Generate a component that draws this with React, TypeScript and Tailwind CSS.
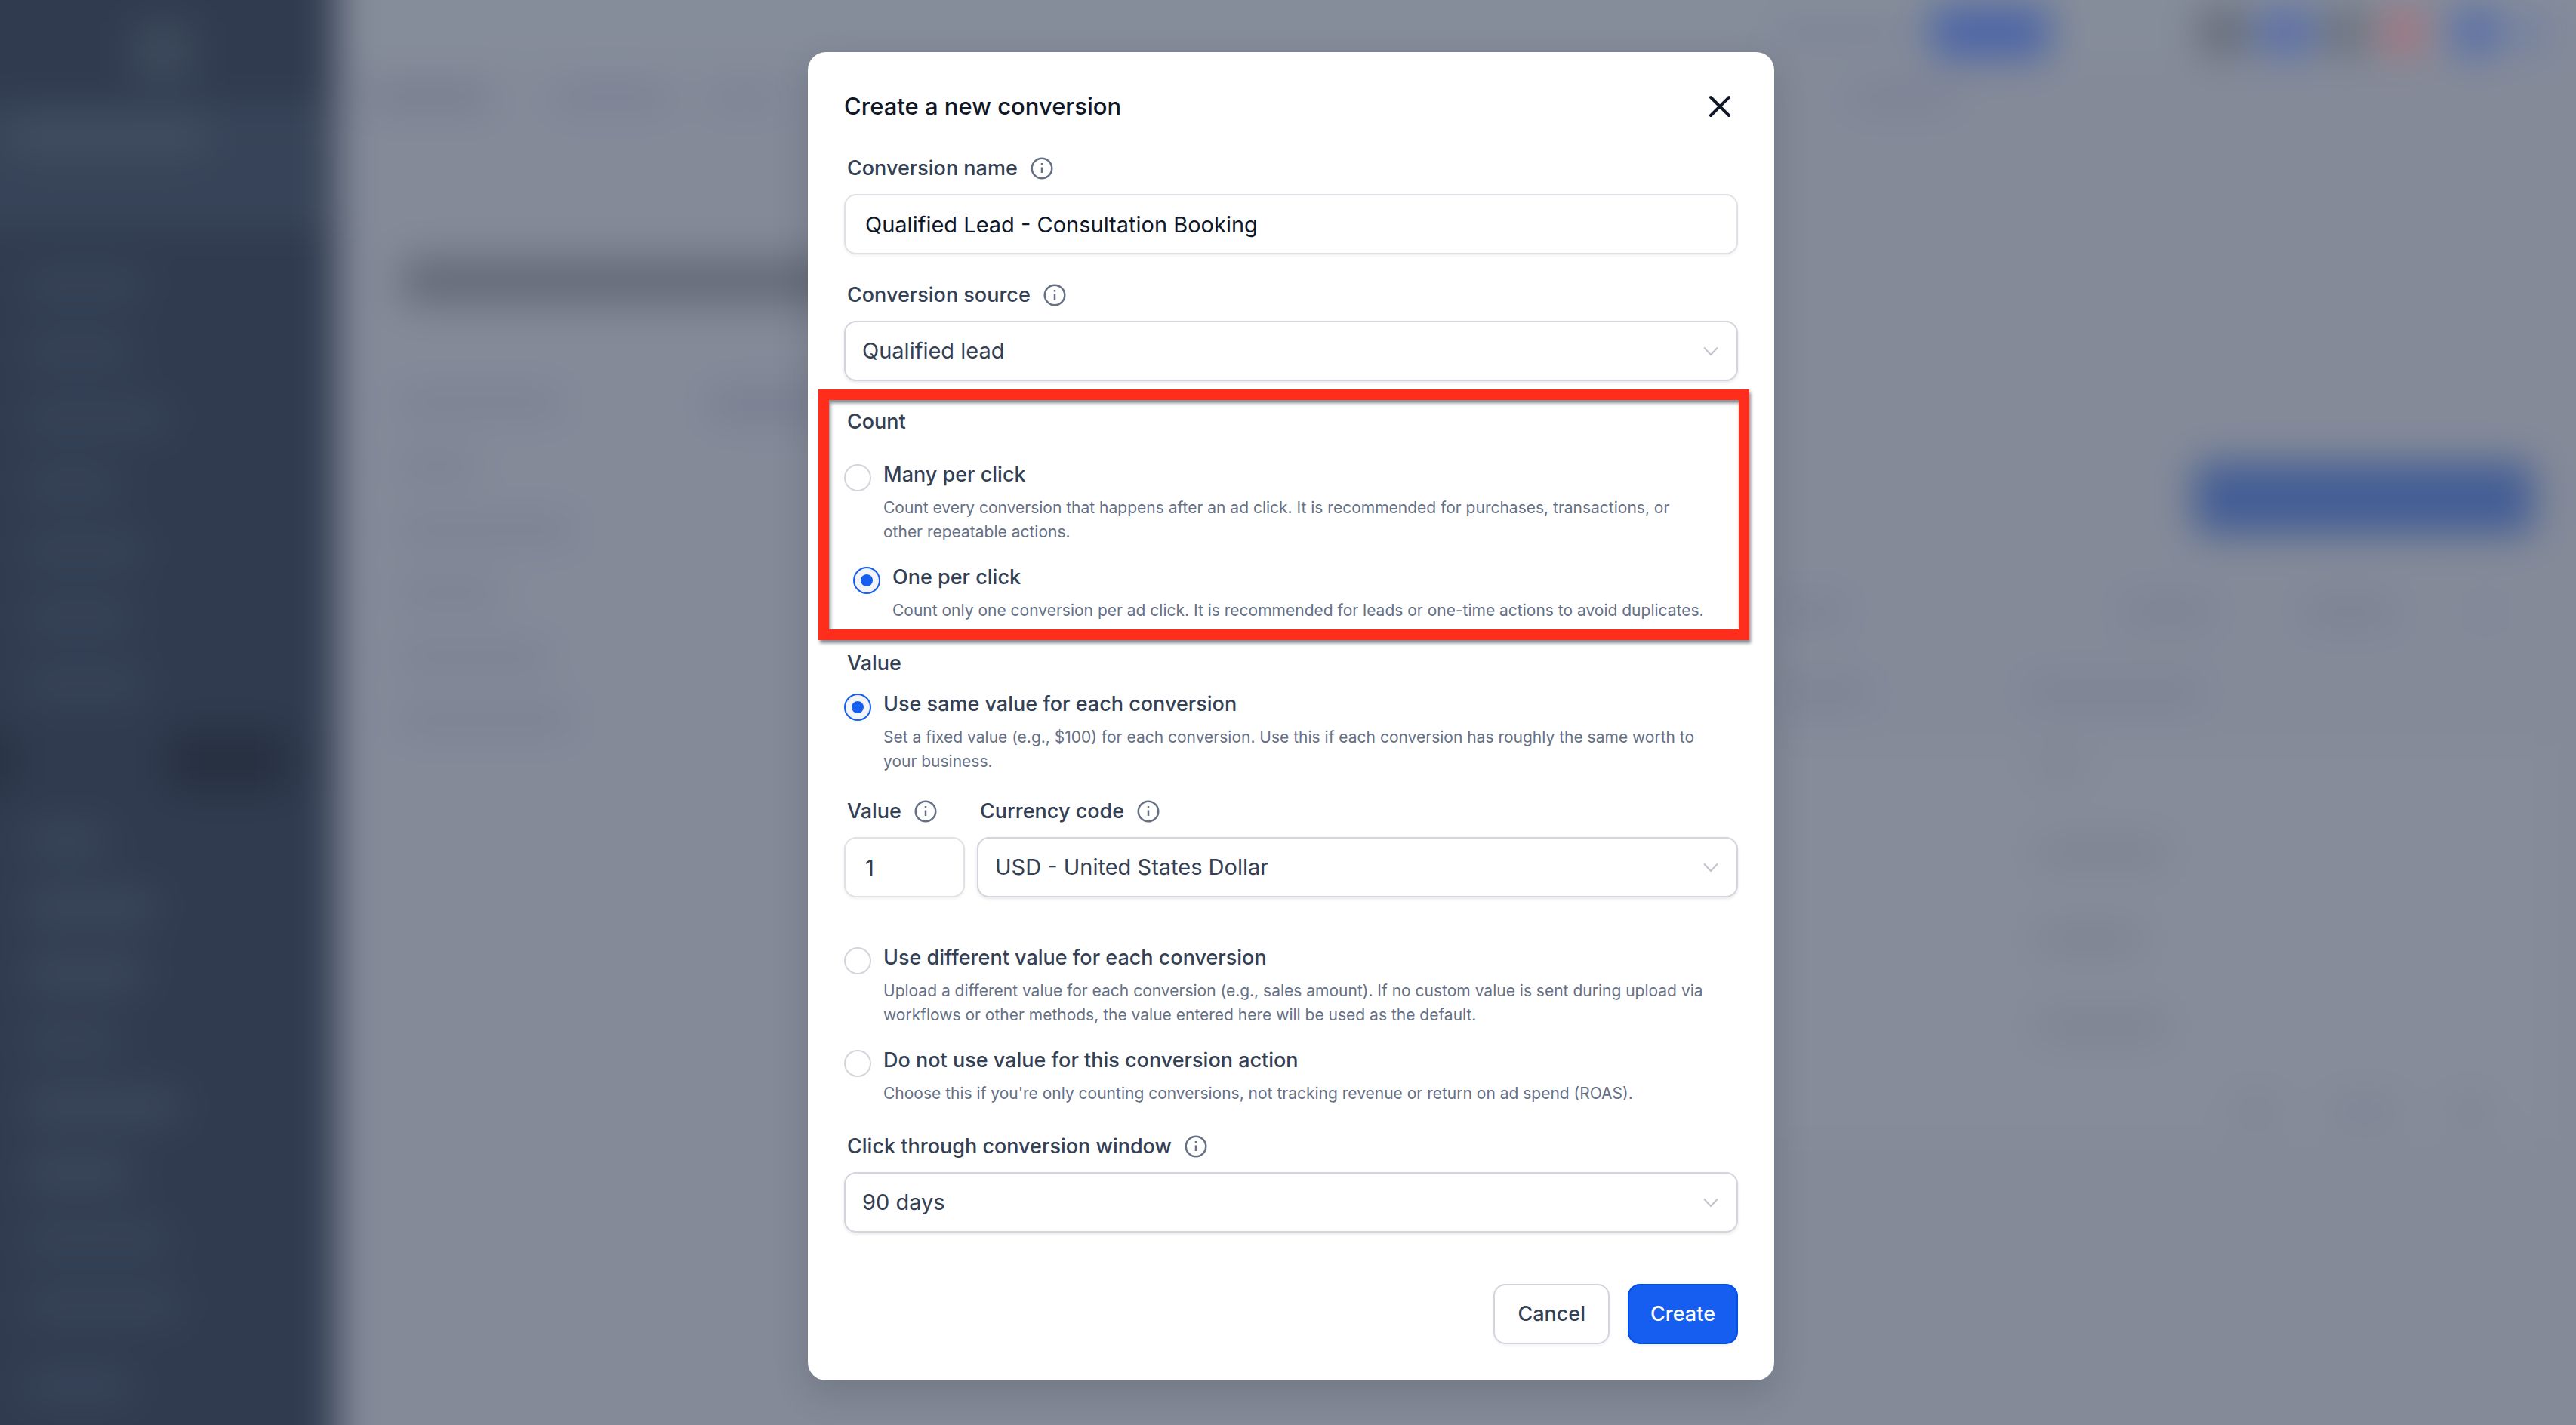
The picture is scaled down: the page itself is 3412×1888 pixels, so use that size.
import { useState } from "react";
import type { ReactNode } from "react";
import clsx from "clsx";
import { X } from "lucide-react";

type Option = {
  value: string;
  title: string;
  description: string;
  className?: string;
};

const countOptions: Option[] = [
  {
    value: "many",
    title: "Many per click",
    description:
      "Count every conversion that happens after an ad click. It is recommended for purchases, transactions, or other repeatable actions.",
  },
  {
    value: "one",
    title: "One per click",
    description:
      "Count only one conversion per ad click. It is recommended for leads or one-time actions to avoid duplicates.",
    className: "ml-3",
  },
];

const sameValue: Option = {
  value: "same",
  title: "Use same value for each conversion",
  description:
    "Set a fixed value (e.g., $100) for each conversion. Use this if each conversion has roughly the same worth to your business.",
};

const otherValues: Option[] = [
  {
    value: "different",
    title: "Use different value for each conversion",
    description:
      "Upload a different value for each conversion (e.g., sales amount). If no custom value is sent during upload via workflows or other methods, the value entered here will be used as the default.",
  },
  {
    value: "none",
    title: "Do not use value for this conversion action",
    description:
      "Choose this if you're only counting conversions, not tracking revenue or return on ad spend (ROAS).",
  },
];

export default function App() {
  const [name, setName] = useState("Qualified Lead - Consultation Booking");
  const [amount, setAmount] = useState("1");
  const [count, setCount] = useState("one");
  const [valueMode, setValueMode] = useState("same");

  return (
    <div className="relative flex min-h-screen items-start justify-center overflow-hidden bg-[#848a98] pt-[69px] pb-[59px] pl-2 font-[Inter,sans-serif]">
      <Backdrop />
      <div
        role="dialog"
        aria-labelledby="dialog-title"
        className="relative w-full max-w-[1280px] rounded-3xl bg-white p-12 shadow-[0_16px_48px_rgba(16,24,40,0.16)]"
      >
        <div className="flex items-center justify-between">
          <h1 id="dialog-title" className="text-[31px] leading-12 font-medium text-[#101828]">
            Create a new conversion
          </h1>
          <button type="button" aria-label="Close" className="text-[#101828]">
            <X className="size-12" strokeWidth={2} />
          </button>
        </div>

        <form className="mt-[38px] flex flex-col gap-[34px]" onSubmit={(e) => e.preventDefault()}>
          <Field id="name" label="Conversion name" info>
            <TextInput id="name" value={name} onChange={setName} className="text-[#101828]" />
          </Field>

          <Field id="source" label="Conversion source" info>
            <Select id="source" options={["Qualified lead", "Converted lead"]} />
          </Field>

          <div className="relative">
            <fieldset>
              <legend className="px-1 text-[27px] leading-10 font-medium text-[#344054]">Count</legend>
              <div className="mt-[30px] flex flex-col gap-6">
                {countOptions.map((option) => (
                  <RadioOption
                    key={option.value}
                    name="count"
                    option={option}
                    checked={count === option.value}
                    onSelect={setCount}
                  />
                ))}
              </div>
            </fieldset>
            {/* highlight frame */}
            <div className="pointer-events-none absolute -top-[23px] -right-[15px] -bottom-[23px] -left-[34px] border-[14px] border-[#ff2d1c] drop-shadow-[2px_4px_2px_rgba(16,24,40,0.5)]" />
          </div>

          <fieldset>
            <legend className="px-1 text-[27px] leading-10 font-medium text-[#344054]">Value</legend>
            <div className="mt-[14px]">
              <RadioOption
                name="value-mode"
                option={sameValue}
                checked={valueMode === "same"}
                onSelect={setValueMode}
              />
              <div className="mt-[30px] flex gap-4">
                <div className="w-40 shrink-0">
                  <Field id="amount" label="Value" info>
                    <TextInput id="amount" value={amount} onChange={setAmount} className="text-[#344054]" />
                  </Field>
                </div>
                <div className="min-w-0 flex-1">
                  <Field id="currency" label="Currency code" info>
                    <Select id="currency" options={["USD - United States Dollar", "EUR - Euro"]} />
                  </Field>
                </div>
              </div>
              <div className="mt-[60px] flex flex-col gap-6">
                {otherValues.map((option) => (
                  <RadioOption
                    key={option.value}
                    name="value-mode"
                    option={option}
                    checked={valueMode === option.value}
                    onSelect={setValueMode}
                  />
                ))}
              </div>
            </div>
          </fieldset>

          <Field id="window" label="Click through conversion window" info>
            <Select id="window" options={["90 days", "60 days", "30 days"]} />
          </Field>

          <div className="mt-[34px] flex justify-end gap-6">
            <button
              type="button"
              className="h-20 rounded-2xl border-2 border-[#d3d4dc] bg-white px-[30px] text-[27px] font-medium text-[#344054] shadow-[0_2px_4px_rgba(16,24,40,0.05)]"
            >
              Cancel
            </button>
            <button
              type="submit"
              className="h-20 rounded-2xl border-2 border-[#004eeb] bg-[#155eef] px-7 text-[27px] font-medium text-white shadow-[0_2px_4px_rgba(16,24,40,0.05)]"
            >
              Create
            </button>
          </div>
        </form>
      </div>
    </div>
  );
}

function Field({ id, label, info, children }: { id: string; label: string; info?: boolean; children: ReactNode }) {
  return (
    <div className="flex flex-col gap-[14px]">
      <div className="flex items-center gap-4 px-1">
        <label htmlFor={id} className="text-[27px] leading-10 font-medium text-[#344054]">
          {label}
        </label>
        {info && <InfoIcon />}
      </div>
      {children}
    </div>
  );
}

function TextInput({
  id,
  value,
  onChange,
  className,
}: {
  id: string;
  value: string;
  onChange: (value: string) => void;
  className?: string;
}) {
  return (
    <input
      id={id}
      type="text"
      value={value}
      onChange={(e) => onChange(e.target.value)}
      className={clsx(
        "h-20 w-full rounded-2xl border-2 border-[#e0e0e6] bg-white px-[26px] text-[29px] shadow-[0_2px_4px_rgba(16,24,40,0.06)] outline-none",
        className
      )}
    />
  );
}

function Select({ id, options }: { id: string; options: string[] }) {
  return (
    <div className="relative">
      <select
        id={id}
        className="h-20 w-full appearance-none rounded-2xl border-2 border-[#d3d4dc] bg-white px-[22px] text-[29px] text-[#344054] shadow-[0_2px_4px_rgba(16,24,40,0.1)] outline-none"
      >
        {options.map((option) => (
          <option key={option}>{option}</option>
        ))}
      </select>
      <svg
        viewBox="0 0 24 24"
        fill="none"
        stroke="#c2c2ca"
        strokeWidth="2"
        className="pointer-events-none absolute inset-y-0 right-6 my-auto size-6"
      >
        <path d="M3 7.5l9 9.5 9-9.5" />
      </svg>
    </div>
  );
}

function RadioOption({
  name,
  option,
  checked,
  onSelect,
}: {
  name: string;
  option: Option;
  checked: boolean;
  onSelect: (value: string) => void;
}) {
  const id = `${name}-${option.value}`;
  return (
    <div className={clsx("flex items-start gap-4", option.className)}>
      <input
        id={id}
        type="radio"
        name={name}
        checked={checked}
        onChange={() => onSelect(option.value)}
        aria-describedby={`${id}-text`}
        className="mt-1.5 grid size-9 shrink-0 appearance-none place-content-center rounded-full border-2 border-[#d3d4dc] bg-white before:size-4 before:rounded-full checked:border-[#155eef] checked:bg-[#f2f4f9] checked:before:bg-[#155eef]"
      />
      <div className="pr-9">
        <label htmlFor={id} className="block text-[27px] leading-10 font-medium text-[#344054]">
          {option.title}
        </label>
        <p id={`${id}-text`} className="mt-2 text-[21px] leading-8 text-[#667085]">
          {option.description}
        </p>
      </div>
    </div>
  );
}

function InfoIcon() {
  return (
    <svg
      viewBox="0 0 32 32"
      fill="none"
      stroke="#667085"
      strokeWidth="2.5"
      className="size-8"
      aria-hidden="true"
    >
      <circle cx="16" cy="16" r="13.25" />
      <path d="M16 14.5v7.5M16 9v2.5" />
    </svg>
  );
}

// Out of focus page behind the dialog
function Backdrop() {
  return (
    <div aria-hidden="true" className="absolute -inset-16 flex blur-[26px]">
      <div className="flex w-[510px] shrink-0 flex-col bg-[#303b50] pt-[94px]">
        <div className="ml-[240px] h-[76px] w-20 bg-[#3e4a5c]" />
        <div className="mt-8 flex h-[84px] items-center bg-[#384459] pl-20">
          <Bar className="h-14 w-64 bg-[#414d60]" />
        </div>
        <div className="mt-2 h-[70px] bg-[#384459]" />
        <div className="mt-14 ml-24 flex flex-col gap-11">
          <Bar className="h-11 w-40 bg-[#384459]" />
          <Bar className="h-11 w-36 bg-[#384459]" />
          <Bar className="h-11 w-48 bg-[#384459]" />
          <Bar className="h-11 w-32 bg-[#384459]" />
          <Bar className="h-11 w-40 bg-[#384459]" />
          <Bar className="h-11 w-36 bg-[#384459]" />
          <Bar className="h-11 w-40 bg-[#384459]" />
        </div>
        <div className="mt-10 flex h-20 justify-between">
          <div className="w-[84px] bg-[#283243]" />
          <div className="mr-16 w-40 bg-[#263040]" />
        </div>
        <div className="mt-11 ml-24 flex flex-col gap-11">
          <Bar className="h-11 w-28 bg-[#3a465a]" />
          <Bar className="h-11 w-44 bg-[#3c485b]" />
          <Bar className="h-11 w-40 bg-[#3c485b]" />
          <Bar className="h-11 w-32 bg-[#384459]" />
          <Bar className="h-11 w-52 bg-[#3c485b]" />
          <Bar className="h-11 w-36 bg-[#3c485b]" />
          <Bar className="h-11 w-48 bg-[#384459]" />
          <Bar className="h-11 w-52 bg-[#384459]" />
        </div>
        <Bar className="mt-auto mb-[92px] ml-24 h-12 w-36 bg-[#384459]" />
      </div>

      <div className="flex min-w-0 flex-1 flex-col bg-[#848a98] pr-16">
        <div className="flex h-[148px] items-center justify-end bg-[#868d9a] pt-16">
          <Bar className="mr-6 h-8 w-48 bg-[#7c8395]" />
          <Bar className="mr-[196px] h-[72px] w-40 bg-[#4c65a6]" />
          <Bar className="mr-3 h-16 w-16 bg-[#656b77]" />
          <Bar className="mr-3 h-16 w-20 bg-[#5a6fa8]" />
          <Bar className="mr-6 h-16 w-14 bg-[#696f7b]" />
          <Bar className="mr-10 h-16 w-12 bg-[#a86f79]" />
          <Bar className="mr-5 h-16 w-16 bg-[#556ca8]" />
          <Bar className="mr-8 h-16 w-12 bg-[#7480a0]" />
        </div>
        <div className="flex h-[86px] items-center pl-11">
          <Bar className="h-9 w-40 bg-[#757c8e]" />
          <Bar className="ml-20 h-8 w-40 bg-[#7a8093]" />
          <Bar className="ml-12 h-8 w-24 bg-[#7c8294]" />
          <Bar className="mr-[820px] ml-auto h-8 w-36 bg-[#7b8194]" />
        </div>
        <Bar className="mt-[170px] ml-[86px] h-16 w-[640px] bg-[#656b78]" />
        <div className="mt-28 flex justify-between">
          <div className="ml-[76px] flex gap-44">
            <div className="flex flex-col gap-12">
              <Bar className="h-9 w-56 bg-[#7b8193]" />
              <Bar className="h-9 w-28 bg-[#7b8193]" />
              <Bar className="h-9 w-60 bg-[#7b8193]" />
              <Bar className="h-9 w-36 bg-[#7b8193]" />
              <Bar className="h-9 w-52 bg-[#7b8193]" />
              <Bar className="h-9 w-60 bg-[#7b8193]" />
            </div>
            <Bar className="h-10 w-60 bg-[#777e90]" />
          </div>
          <div className="mt-[96px] flex w-[1060px] flex-col">
            <Bar className="mr-14 h-24 w-[450px] self-end bg-[#435d95]" />
            <div className="mt-20 flex h-11 items-center">
              <Bar className="h-9 w-24 bg-[#7c8294]" />
              <Bar className="ml-[360px] h-9 w-32 bg-[#7c8294]" />
              <Bar className="ml-28 h-9 w-32 bg-[#7b8193]" />
              <Bar className="ml-24 h-8 w-10 bg-[#7f8596]" />
            </div>
            <div className="mt-16 flex h-11 items-center">
              <Bar className="h-9 w-32 bg-[#7c8294]" />
              <Bar className="ml-[200px] h-9 w-60 bg-[#7c8294]" />
            </div>
            <div className="mt-12 mr-10 flex h-[520px] flex-col gap-[74px] bg-[#868c99] pl-[344px]">
              <Bar className="mt-2 h-10 w-16 bg-[#7f8594]" />
              <Bar className="h-10 w-44 bg-[#7d8392]" />
              <Bar className="h-10 w-36 bg-[#7d8392]" />
              <Bar className="h-10 w-44 bg-[#7d8392]" />
              <div className="ml-[260px] flex gap-16">
                <Bar className="h-9 w-16 bg-[#7e8494]" />
                <Bar className="h-9 w-24 bg-[#7e8494]" />
                <Bar className="h-9 w-14 bg-[#7e8494]" />
              </div>
            </div>
          </div>
        </div>
      </div>
    </div>
  );
}

function Bar({ className }: { className: string }) {
  return <div className={clsx("shrink-0 rounded-2xl", className)} />;
}
